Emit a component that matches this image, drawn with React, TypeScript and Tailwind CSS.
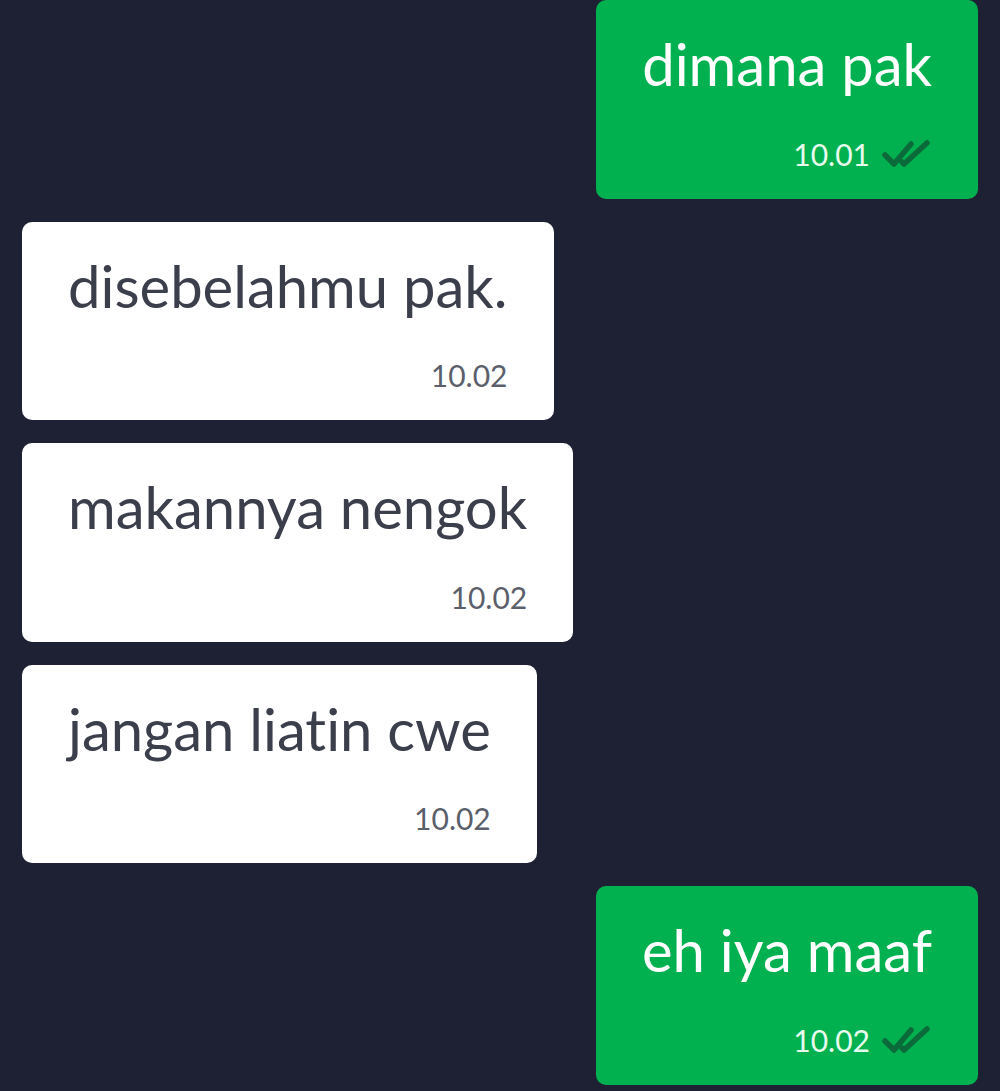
const DoubleCheck = () => (
  <svg width="50" height="28" viewBox="0 0 50 28" fill="none" className="ml-3">
    <path d="M3 15 L12 24 L29 4" stroke="#0b6a39" strokeWidth="5.5" strokeLinecap="round" strokeLinejoin="round" />
    <path d="M20 22 L22 24 L45 3" stroke="#0b6a39" strokeWidth="5.5" strokeLinecap="round" strokeLinejoin="round" />
  </svg>
);

interface BubbleProps {
  text: string;
  time: string;
  mine?: boolean;
}

const Bubble = ({ text, time, mine }: BubbleProps) => (
  <div className={mine ? 'flex justify-end' : 'flex justify-start'}>
    <div
      className={
        'rounded-[10px] px-[46px] pt-[29px] pb-[27px] ' +
        (mine ? 'bg-[#01b14f] text-white' : 'bg-white text-[#3b3e4b]')
      }
    >
      <div className="text-[58px] leading-[1.2] whitespace-nowrap [font-variant-ligatures:none]">{text}</div>
      <div className="mt-[37px] flex items-center justify-end">
        <span className={'text-[30px] leading-[1.2] ' + (mine ? 'text-[#e6fbee]' : 'text-[#5b5f6b]')}>{time}</span>
        {mine && <DoubleCheck />}
      </div>
    </div>
  </div>
);

export default function App() {
  return (
    <div className="min-h-[1091px] w-[1000px] bg-[#1e2134] px-[22px] flex flex-col gap-[23px]" style={{ fontFamily: 'Lato, "Noto Sans", sans-serif' }}>
      <Bubble text="dimana pak" time="10.01" mine />
      <Bubble text="disebelahmu pak." time="10.02" />
      <Bubble text="makannya nengok" time="10.02" />
      <Bubble text="jangan liatin cwe" time="10.02" />
      <Bubble text="eh iya maaf" time="10.02" mine />
    </div>
  );
}
